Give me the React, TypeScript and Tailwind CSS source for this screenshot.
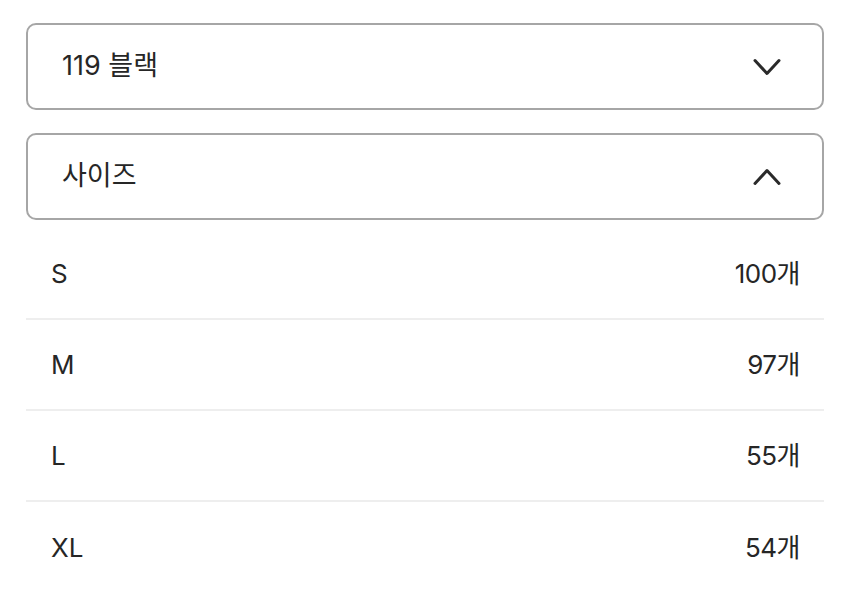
const sizes = [
  { label: 'S', count: '100개' },
  { label: 'M', count: '97개' },
  { label: 'L', count: '55개' },
  { label: 'XL', count: '54개' },
];

const Chevron = ({ up }: { up?: boolean }) => (
  <svg width="30" height="20" viewBox="0 0 30 20" fill="none" className="text-[#2a2a2a]">
    <polyline
      points={up ? '3,16.5 15,3.5 27,16.5' : '3,3.5 15,16.5 27,3.5'}
      stroke="currentColor"
      strokeWidth="3"
      strokeLinecap="round"
      strokeLinejoin="round"
    />
  </svg>
);

const Select = ({ label, open }: { label: string; open?: boolean }) => (
  <button className="w-full h-[87px] flex items-center justify-between pl-[34px] pr-[40px] rounded-[10px] border-2 border-[#a6a6a6] bg-white text-left">
    <span className="text-[27px] text-[#262626]">{label}</span>
    <Chevron up={open} />
  </button>
);

export default function App() {
  return (
    <div
      className="w-[850px] h-[592px] bg-white px-[26px] pt-[23px] overflow-hidden"
      style={{ fontFamily: 'Inter, "Noto Sans CJK KR", sans-serif' }}
    >
      <div className="space-y-[23px]">
        <Select label="119 블랙" />
        <Select label="사이즈" open />
      </div>
      <ul className="mt-[9px]">
        {sizes.map((s, i) => (
          <li
            key={s.label}
            className={`h-[91px] flex items-center justify-between pl-[25px] pr-[24px] ${
              i < sizes.length - 1 ? 'border-b-2 border-[#eeeeee]' : ''
            }`}
          >
            <span className="text-[26px] text-[#262626]">{s.label}</span>
            <span className="text-[26px] text-[#262626] tracking-[-0.5px]">{s.count}</span>
          </li>
        ))}
      </ul>
    </div>
  );
}
